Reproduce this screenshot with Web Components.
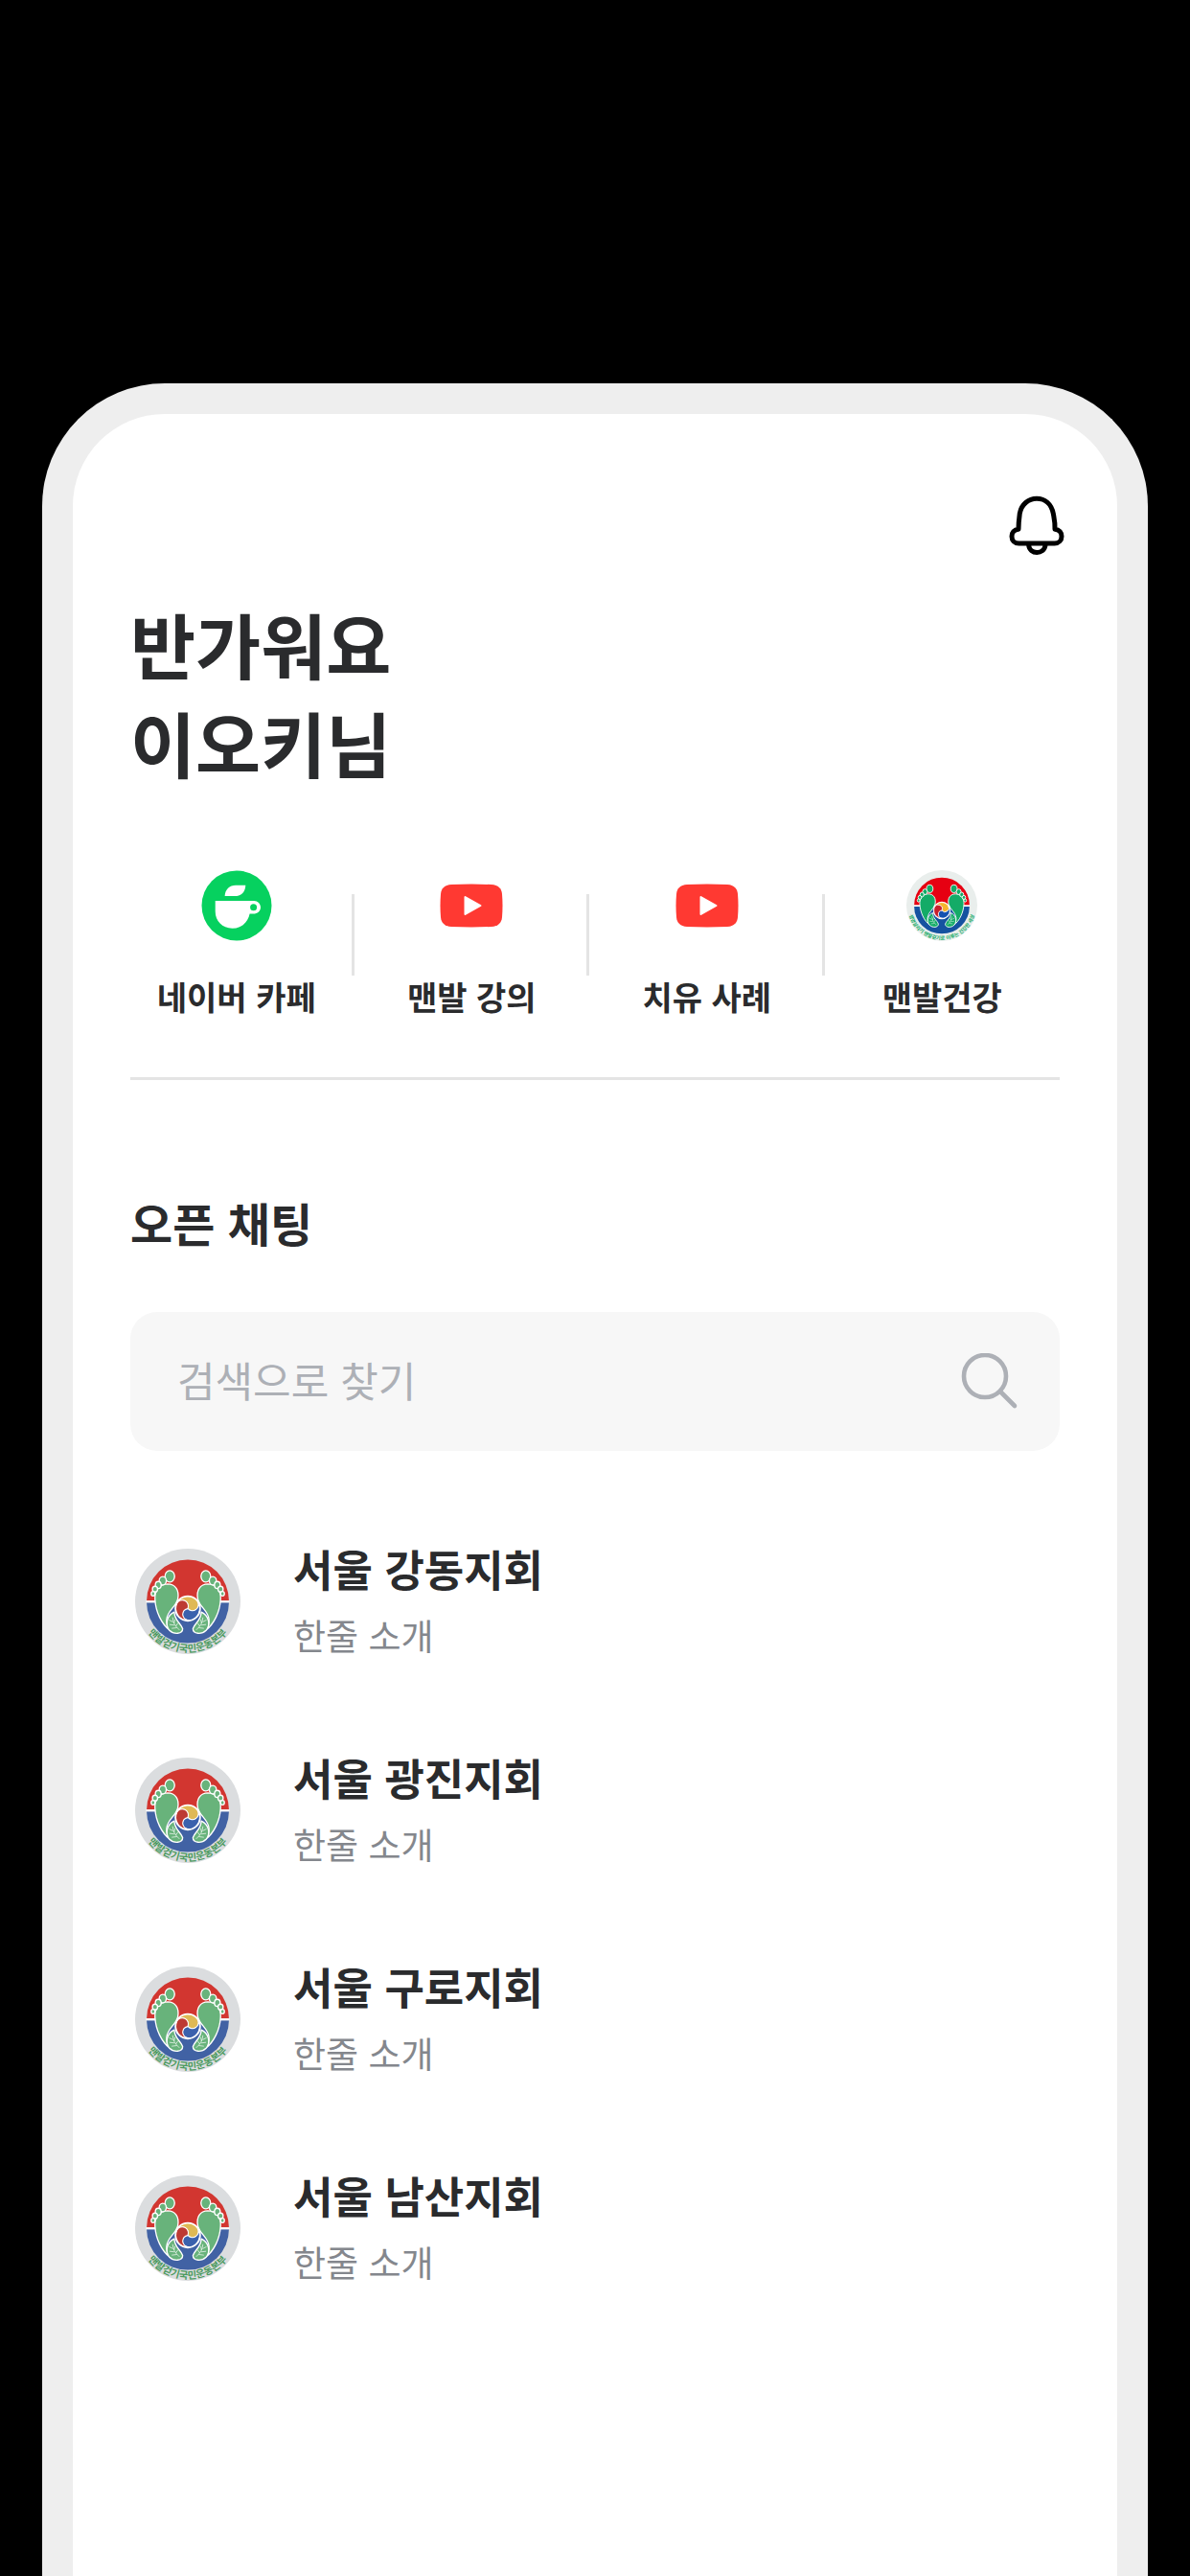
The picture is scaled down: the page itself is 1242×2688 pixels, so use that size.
<!DOCTYPE html>
<html lang="ko">
<head>
<meta charset="utf-8">
<meta name="viewport" content="width=device-width, initial-scale=1">
<title>맨발걷기 오픈 채팅</title>
<style>
  body {
    margin: 0;
    background: #000;
    color: #2a2b2d;
    font-family: "Noto Sans CJK KR", "Noto Sans", sans-serif;
  }
</style>
</head>
<body>
<phone-frame>
  <top-bar></top-bar>
  <welcome-title>반가워요<br>이오키님</welcome-title>
  <quick-links>
    <quick-link icon="cafe">네이버 카페</quick-link>
    <quick-link icon="video">맨발 강의</quick-link>
    <quick-link icon="video">치유 사례</quick-link>
    <quick-link icon="emblem">맨발건강</quick-link>
  </quick-links>
  <chat-section>
    <span slot="title">오픈 채팅</span>
    <chat-search></chat-search>
    <chat-list>
      <chat-room>서울 강동지회<span slot="intro">한줄 소개</span></chat-room>
      <chat-room>서울 광진지회<span slot="intro">한줄 소개</span></chat-room>
      <chat-room>서울 구로지회<span slot="intro">한줄 소개</span></chat-room>
      <chat-room>서울 남산지회<span slot="intro">한줄 소개</span></chat-room>
    </chat-list>
  </chat-section>
</phone-frame>

<script>
  const define = (name, markup) => {
    customElements.define(name, class extends HTMLElement {
      constructor() {
        super();
        this.attachShadow({ mode: "open" }).innerHTML =
          typeof markup === "function" ? markup(this) : markup;
      }
    });
  };

  // Round club emblem: two feet over a red and blue disc, with a motto on the rim.
  define("club-emblem", (el) => {
    const vivid = el.hasAttribute("vivid");
    const c = vivid
      ? { rim: "#e9eeec", red: "#e60012", blue: "#1552a0", green: "#14ab67", gold: "#f5b52e", swirlRed: "#c8202c", swirlBlue: "#1552b0", text: "#14ab67" }
      : { rim: "#dbdddf", red: "#d23630", blue: "#4162a4", green: "#68b37b", gold: "#dfb955", swirlRed: "#bd3a33", swirlBlue: "#3a61ad", text: "#4b9a60" };
    const motto = vivid ? "생명살리기 맨발걷기로 이루는 건강한 세상" : "맨발걷기국민운동본부";
    const swirl = "M-33.5-15.6A37 37 0 0 1 30.3-21.2A18.5 18.5 0 0 1 0 0A18.5 18.5 0 0 0-33.5-15.6Z";
    const foot = `
      <g fill="${c.green}" stroke="#fff" stroke-width="4" stroke-linejoin="round">
        <path d="M98 208C96 178 112 161 137 160C162 160 174 180 169 206C163 232 137 242 134 270C133 286 139 298 144 304C118 284 100 246 98 208Z"/>
        <path d="M158 247C136 257 127 285 143 304C157 318 184 316 184 299C178 281 158 274 158 247Z"/>
        <path fill="none" stroke-width="2" d="M153 264Q154 286 174 303M154 278L142 272M159 288L143 286M166 296L150 298M157 282L160 270M163 291L170 281"/>
        <ellipse cx="144" cy="136" rx="15" ry="18"/>
        <ellipse cx="122" cy="150" rx="11" ry="13"/>
        <ellipse cx="108" cy="163" rx="9" ry="11"/>
        <ellipse cx="98" cy="176" rx="8" ry="9"/>
        <ellipse cx="92" cy="190" rx="6" ry="7"/>
      </g>`;
    return `
      <style>
        :host { display: block; }
        svg { display: block; width: 100%; height: 100%; overflow: visible; }
        text { font-weight: 700; }
      </style>
      <svg viewBox="36 50 328 328" role="img" aria-label="${motto}">
        <circle cx="200" cy="214" r="164" fill="${c.rim}"/>
        <path fill="${c.red}" d="M72 212A128 128 0 0 1 328 212Z"/>
        <path fill="${c.blue}" d="M72 218A128 126 0 0 0 328 218Z"/>
        <path stroke="#fff" stroke-width="6" d="M70 215H330"/>
        ${foot}
        <g transform="translate(400 0) scale(-1 1)">${foot}</g>
        <g transform="translate(200 236)">
          <circle r="41" fill="#fff"/>
          <g stroke="#fff" stroke-width="3">
            <path fill="${c.gold}" d="${swirl}"/>
            <path fill="${c.swirlBlue}" transform="rotate(120)" d="${swirl}"/>
            <path fill="${c.swirlRed}" transform="rotate(240)" d="${swirl}"/>
          </g>
        </g>
        <path id="rim" fill="none" d="M42 214A158 158 0 0 0 358 214"/>
        <text font-size="${vivid ? 23 : 31}" fill="${c.text}" text-anchor="middle"><textPath href="#rim" startOffset="50%">${motto}</textPath></text>
      </svg>`;
  });

  define("phone-frame", `
    <style>
      :host { display: flex; min-height: 100vh; box-sizing: border-box; padding: 400px 44px 0; }
      main { flex: 1; min-width: 0; background: #fff; border: 32px solid #eee; border-bottom: 0; border-radius: 128px 128px 0 0; }
    </style>
    <main><slot></slot></main>`);

  define("top-bar", `
    <style>
      :host { display: flex; justify-content: flex-end; padding: 84px 54px 0 60px; }
      button { border: 0; padding: 0; background: none; }
      svg { display: block; width: 60px; height: 66px; }
    </style>
    <button type="button" aria-label="알림">
      <svg viewBox="64 48 180 198" fill="none" stroke="#000" stroke-width="15" stroke-linecap="round" stroke-linejoin="round">
        <path d="M97 157C83 158 76 168 76 179C76 192 85 201 98 201H210C223 201 232 191 232 179C232 168 225 158 211 157C212 135 208 120 206 108C200 78 180 61 154 61C128 61 106 79 101 107C99 122 97 135 97 157Z"/>
        <path d="M129 206C131 237 178 237 181 206"/>
      </svg>
    </button>`);

  define("welcome-title", `
    <style>
      :host { display: block; padding: 37px 60px 0; }
      h1 { margin: 0; font-size: 74px; line-height: 103px; font-weight: 700; }
    </style>
    <h1><slot></slot></h1>`);

  define("quick-links", `
    <style>
      :host { display: block; padding: 83px 0 0; }
      nav { display: grid; grid-template-columns: repeat(4, 1fr); padding: 0 60px 58px 48px; }
      hr { margin: 0 60px; border: 0; height: 3px; background: #e4e4e4; }
      ::slotted(:not(:last-child)) { --rule: #e4e4e4; }
    </style>
    <nav aria-label="바로가기"><slot></slot></nav>
    <hr>`);

  const linkIcons = {
    cafe: `<svg viewBox="-37 -37 74 74">
        <circle r="36.5" fill="#06d15f"/>
        <path fill="#fff" fill-rule="evenodd" d="M-22.3-5H18C22-5 25-2 25 1.8C25 6 21.500 8.600 17.500 8.600H13.600C12 17.500 4.500 23.700-4.500 23.700C-15 23.700-22.300 16-22.300 6ZM17.600-1.700A3.500 3.500 0 1 0 17.600 5.300A3.500 3.500 0 1 0 17.600-1.700Z"/>
        <path fill="#fff" d="M-12.400-10C-12-17-7.500-21.300-1-21.300H9.300C9-14.500 5-10-2-10Z"/>
      </svg>`,
    video: `<svg viewBox="-37 -37 74 74">
        <path fill="#ff3932" d="M-21-22Q0-22.800 21-22C28-21.500 31.500-18 32-12Q33 0 32 12C31.500 18 28 21.500 21 22Q0 22.800-21 22C-28 21.500-31.500 18-32 12Q-33 0-32-12C-31.500-18-28-21.500-21-22Z"/>
        <path fill="#fff" stroke="#fff" stroke-width="2" stroke-linejoin="round" d="M-6.500-9V9L9.500 0Z"/>
      </svg>`,
    emblem: `<club-emblem vivid></club-emblem>`
  };

  customElements.define("quick-link", class extends HTMLElement {
    connectedCallback() {
      if (this.shadowRoot) return;
      this.attachShadow({ mode: "open" }).innerHTML = `
        <style>
          :host { display: flex; align-items: center; }
          a { flex: 1; display: flex; flex-direction: column; align-items: center; gap: 32px; color: inherit; text-decoration: none; font-size: 34px; line-height: 52px; font-weight: 700; white-space: nowrap; }
          svg, club-emblem { display: block; width: 74px; height: 74px; }
          i { width: 3px; height: 85px; margin-left: -3px; margin-bottom: 24px; background: var(--rule, transparent); }
        </style>
        <a href="#">${linkIcons[this.getAttribute("icon")]}<span><slot></slot></span></a><i></i>`;
    }
  });

  define("chat-section", `
    <style>
      :host { display: block; padding: 113px 60px 0; }
      h2 { margin: 0 0 59px; font-size: 48px; line-height: 70px; font-weight: 700; }
    </style>
    <h2><slot name="title"></slot></h2>
    <slot></slot>`);

  define("chat-search", `
    <style>
      :host { display: block; }
      label { display: flex; align-items: center; height: 145px; box-sizing: border-box; padding: 0 43px 0 49px; border-radius: 28px; background: #f7f7f7; }
      input { flex: 1; min-width: 0; height: 64px; padding: 0 0 6px; border: 0; outline: 0; background: none; color: inherit; font: 400 43px/58px "Noto Sans CJK KR", sans-serif; }
      input::placeholder { color: #adb0b6; opacity: 1; }
      svg { width: 60px; height: 60px; }
    </style>
    <label>
      <input type="text" aria-label="검색으로 찾기" placeholder="검색으로 찾기">
      <svg viewBox="0 0 60 60" fill="none" stroke="#adb0b6" stroke-width="4.600" stroke-linecap="round">
        <circle cx="25" cy="24" r="22"/><path d="M41 40L56 55"/>
      </svg>
    </label>`);

  define("chat-list", `
    <style>
      :host { display: flex; flex-direction: column; gap: 80px; padding: 88px 0 80px; }
    </style>
    <slot></slot>`);

  define("chat-room", `
    <style>
      :host { display: block; }
      a { display: flex; align-items: center; gap: 55px; padding-left: 5px; color: inherit; text-decoration: none; }
      club-emblem { width: 110px; height: 110px; }
      h3, p { margin: 0; }
      h3 { font-size: 45px; line-height: 70px; font-weight: 700; }
      p { font-size: 37px; line-height: 68px; color: #84878d; }
    </style>
    <a href="#">
      <club-emblem></club-emblem>
      <div><h3><slot></slot></h3><p><slot name="intro"></slot></p></div>
    </a>`);
</script>
</body>
</html>
